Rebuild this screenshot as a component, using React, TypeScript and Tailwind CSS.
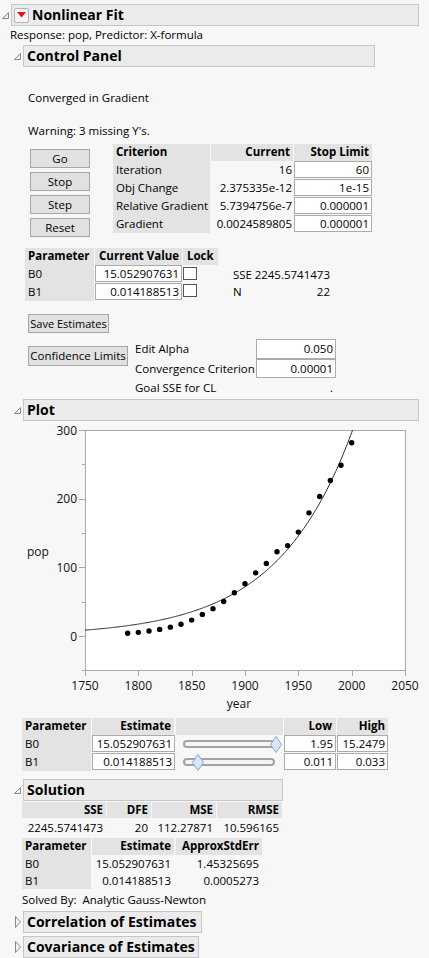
import React from 'react';

const pops = [
  3.93, 5.31, 7.24, 9.64, 12.87, 17.07, 23.19, 31.44, 39.82, 50.16, 62.95,
  75.99, 91.97, 105.71, 122.78, 131.67, 151.33, 179.32, 203.21, 226.5, 248.7, 281.4,
];

const B0 = 15.052907631;
const B1 = 0.014188513;

// plot frame in svg coords
const px = (year: number) => 85 + ((year - 1750) * 320) / 300;
const py = (v: number) => 215 - v * (206 / 300);

function Tri({ open = true }: { open?: boolean }) {
  return open ? (
    <svg width="9" height="9" viewBox="0 0 9 9" className="shrink-0">
      <path d="M7.5 1.5 L7.5 7.5 L1.5 7.5 Z" fill="#f2f2f2" stroke="#8a8a8a" />
    </svg>
  ) : (
    <svg width="9" height="14" viewBox="0 0 9 14" className="shrink-0">
      <path d="M2.5 1.5 L7.5 7 L2.5 12.5 Z" fill="#f2f2f2" stroke="#8a8a8a" />
    </svg>
  );
}

function Head({
  title,
  className,
  box,
  open = true,
  menu = false,
}: {
  title: string;
  className: string;
  box: string;
  open?: boolean;
  menu?: boolean;
}) {
  return (
    <div className={`flex items-center ${className}`}>
      <Tri open={open} />
      <div className={`h-[22px] bg-[#ebebeb] border border-[#c6c6c6] flex items-center ${box}`}>
        {menu && (
          <div className="ml-[2px] w-[15px] h-[15px] rounded-[2px] border border-[#b4b4b4] bg-[#f4f4f4] flex items-center justify-center">
            <svg width="9" height="6" viewBox="0 0 9 6">
              <path d="M0 0 L9 0 L4.5 5.5 Z" fill="#e0181b" />
            </svg>
          </div>
        )}
        <span className="ml-[3px] font-bold text-[14px] leading-none whitespace-nowrap">{title}</span>
      </div>
    </div>
  );
}

function Btn({ children, className }: { children: React.ReactNode; className: string }) {
  return (
    <div className={`border border-[#a6a6a6] bg-[#e1e1e1] flex items-center justify-center whitespace-nowrap ${className}`}>
      {children}
    </div>
  );
}

function Input({ children, className = 'h-[17px]' }: { children: React.ReactNode; className?: string }) {
  return (
    <div className={`bg-white border border-[#ababab] flex items-center justify-end pr-[2px] ${className}`}>
      {children}
    </div>
  );
}

function Slider({ at }: { at: number }) {
  return (
    <div className="relative w-[92px] h-[8px] rounded-full border-2 border-[#a3a3a3] bg-[#f4f4f4]">
      <svg
        width="12"
        height="17"
        viewBox="0 0 12 17"
        className="absolute top-[-6.5px]"
        style={{ left: at - 6 }}
      >
        <path d="M6 0.5 L11.5 8.5 L6 16.5 L0.5 8.5 Z" fill="#d9e6f6" stroke="#86a4cc" />
      </svg>
    </div>
  );
}

function Plot() {
  let d = '';
  for (let y = 1750; y <= 2010; y += 1) {
    const v = B0 * Math.exp(B1 * (y - 1790));
    d += `${y === 1750 ? 'M' : 'L'}${px(y).toFixed(2)} ${py(v).toFixed(2)} `;
  }
  const years = [1750, 1800, 1850, 1900, 1950, 2000, 2050];
  const yv = [-50, 0, 50, 100, 150, 200, 250, 300];
  return (
    <svg width="429" height="297" viewBox="0 0 429 297" className="block">
      <defs>
        <clipPath id="frame">
          <rect x="85" y="9" width="321" height="241" />
        </clipPath>
      </defs>
      <rect x="85.5" y="9.5" width="320" height="240" fill="white" stroke="#a9a9a9" />
      {yv.map((v) => (
        <line
          key={v}
          x1={v % 100 === 0 ? 79 : 82}
          x2="85"
          y1={Math.round(py(v)) + 0.5}
          y2={Math.round(py(v)) + 0.5}
          stroke="#a9a9a9"
        />
      ))}
      {years.map((y) => (
        <line key={y} x1={Math.round(px(y)) + 0.5} x2={Math.round(px(y)) + 0.5} y1="250" y2="255" stroke="#a9a9a9" />
      ))}
      <g fontFamily="'Open Sans', sans-serif" fontSize="12" fill="#111">
        {[0, 100, 200, 300].map((v) => (
          <text key={v} x="77" y={py(v) + 4.5} textAnchor="end">
            {v}
          </text>
        ))}
        {years.map((y) => (
          <text key={y} x={px(y)} y="269" textAnchor="middle">
            {y}
          </text>
        ))}
        <text x="239" y="287" textAnchor="middle">year</text>
        <text x="27" y="135">pop</text>
      </g>
      <g clipPath="url(#frame)">
        <path d={d} fill="none" stroke="#2a2a2a" strokeWidth="1" />
        {pops.map((p, i) => (
          <circle key={i} cx={px(1790 + i * 10)} cy={py(p)} r="2.7" fill="#000" />
        ))}
      </g>
    </svg>
  );
}

export default function App() {
  const gray = 'bg-[#e3e3e3]';
  return (
    <div className="w-[429px] h-[958px] overflow-hidden bg-[#f7f7f7] text-black text-[11.5px] leading-[16px] font-['Open_Sans',sans-serif] whitespace-nowrap">
      <Head title="Nonlinear Fit" menu className="pt-[4px] pl-[1px]" box="ml-[1px] w-[408px]" />
      <div className="ml-[10px] mt-[1px]">Response: pop, Predictor: X-formula</div>
      <Head title="Control Panel" className="mt-[2px] pl-[13px]" box="ml-[1px] w-[352px]" />

      <div className="ml-[28px] mt-[23px]">Converged in Gradient</div>
      <div className="ml-[28px] mt-[17px]">Warning: 3 missing Y's.</div>

      {/* criterion block */}
      <div className="flex mt-[5px]">
        <div className="ml-[30px] mt-[5px] flex flex-col gap-[4px]">
          {['Go', 'Stop', 'Step', 'Reset'].map((b) => (
            <Btn key={b} className="w-[60px] h-[19px]">
              {b}
            </Btn>
          ))}
        </div>
        <div className="ml-[23px] flex flex-col">
          <div className="flex gap-[1px] h-[17px] font-bold">
            <div className={`w-[97px] ${gray} pl-[3px]`}>Criterion</div>
            <div className={`w-[82px] ${gray} text-right pr-[3px]`}>Current</div>
            <div className={`w-[78px] ${gray} text-right pr-[3px]`}>Stop Limit</div>
          </div>
          <div className="flex gap-[1px]">
            <div className={`w-[97px] ${gray} flex flex-col`}>
              {['Iteration', 'Obj Change', 'Relative Gradient', 'Gradient'].map((t) => (
                <div key={t} className="h-[18px] pl-[3px] flex items-center">
                  {t}
                </div>
              ))}
            </div>
            <div className="w-[82px] flex flex-col">
              {['16', '2.375335e-12', '5.7394756e-7', '0.0024589805'].map((t) => (
                <div key={t} className="h-[18px] pr-[1px] flex items-center justify-end">
                  {t}
                </div>
              ))}
            </div>
            <div className="w-[78px] flex flex-col gap-[1px]">
              {['60', '1e-15', '0.000001', '0.000001'].map((t, i) => (
                <Input key={i}>{t}</Input>
              ))}
            </div>
          </div>
        </div>
      </div>

      {/* parameter block */}
      <div className="flex mt-[11px]">
        <div className="ml-[25px] flex flex-col">
          <div className="flex gap-[1px] h-[17px] font-bold">
            <div className={`w-[69px] ${gray} pl-[3px]`}>Parameter</div>
            <div className={`w-[87px] ${gray} text-right pr-[3px]`}>Current Value</div>
            <div className={`w-[35px] ${gray} pl-[4px]`}>Lock</div>
          </div>
          <div className="flex gap-[1px]">
            <div className={`w-[69px] ${gray} flex flex-col h-[36px]`}>
              <div className="h-[18px] pl-[3px] flex items-center">B0</div>
              <div className="h-[18px] pl-[3px] flex items-center">B1</div>
            </div>
            <div className="w-[87px] flex flex-col gap-[1px]">
              <Input>15.052907631</Input>
              <Input>0.014188513</Input>
            </div>
            <div className="w-[35px] flex flex-col gap-[4px] pt-[2px]">
              <div className="w-[14px] h-[13px] bg-white border border-[#555]" />
              <div className="w-[14px] h-[13px] bg-white border border-[#555]" />
            </div>
          </div>
        </div>
        <div className="ml-[15px] mt-[19px] w-[97px] flex flex-col">
          <div className="flex justify-between h-[17px]">
            <span>SSE</span>
            <span>2245.5741473</span>
          </div>
          <div className="flex justify-between h-[17px]">
            <span>N</span>
            <span>22</span>
          </div>
        </div>
      </div>

      <Btn className="ml-[28px] mt-[13px] w-[81px] h-[19px] bg-[#e0e0e0] border-[#8e8e8e] text-[11px]">Save Estimates</Btn>

      <div className="flex mt-[6px]">
        <Btn className="ml-[28px] mt-[7px] w-[100px] h-[20px] border-[#8e8e8e]">Confidence Limits</Btn>
        <div className="ml-[7px] flex flex-col">
          <div className="flex items-center h-[20px]">
            <span className="w-[121px]">Edit Alpha</span>
            <Input className="w-[80px] h-[20px]">0.050</Input>
          </div>
          <div className="flex items-center h-[19px]">
            <span className="w-[121px]">Convergence Criterion</span>
            <Input className="w-[80px] h-[19px]">0.00001</Input>
          </div>
          <div className="flex items-center h-[20px]">
            <span className="w-[121px]">Goal SSE for CL</span>
            <span className="w-[77px] text-right">.</span>
          </div>
        </div>
      </div>

      <Head title="Plot" className="mt-[1px] pl-[13px]" box="ml-[1px] w-[396px]" />
      <Plot />

      {/* estimate / slider table */}
      <div className="ml-[22px] flex flex-col">
        <div className="flex gap-[1px] h-[17px] font-bold">
          <div className={`w-[69px] ${gray} pl-[3px]`}>Parameter</div>
          <div className={`w-[82px] ${gray} text-right pr-[3px]`}>Estimate</div>
          <div className={`w-[107px] ${gray} ml-[1px]`} />
          <div className={`w-[52px] ${gray} text-right pr-[4px]`}>Low</div>
          <div className={`w-[51px] ${gray} text-right pr-[3px]`}>High</div>
        </div>
        <div className="flex gap-[1px]">
          <div className={`w-[69px] ${gray} flex flex-col h-[36px]`}>
            <div className="h-[18px] pl-[3px] flex items-center">B0</div>
            <div className="h-[18px] pl-[3px] flex items-center">B1</div>
          </div>
          <div className="w-[83px] flex flex-col gap-[1px]">
            <Input>15.052907631</Input>
            <Input>0.014188513</Input>
          </div>
          <div className="w-[107px] flex flex-col">
            <div className="h-[18px] pl-[7px] flex items-center">
              <Slider at={91} />
            </div>
            <div className="h-[18px] pl-[7px] flex items-center">
              <Slider at={13} />
            </div>
          </div>
          <div className="w-[52px] flex flex-col gap-[1px]">
            <Input>1.95</Input>
            <Input>0.011</Input>
          </div>
          <div className="w-[51px] flex flex-col gap-[1px]">
            <Input>15.2479</Input>
            <Input>0.033</Input>
          </div>
        </div>
      </div>

      <Head title="Solution" className="mt-[8px] pl-[13px]" box="ml-[1px] w-[260px]" />

      <div className="ml-[22px] mt-[1px] flex flex-col">
        <div className="flex gap-[1px] h-[16px] font-bold">
          <div className={`w-[84px] ${gray} text-right pr-[3px]`}>SSE</div>
          <div className={`w-[44px] ${gray} text-right pr-[3px]`}>DFE</div>
          <div className={`w-[64px] ${gray} text-right pr-[3px]`}>MSE</div>
          <div className={`w-[65px] ${gray} text-right pr-[3px]`}>RMSE</div>
        </div>
        <div className="flex gap-[1px] h-[20px] items-center">
          <div className="w-[84px] text-right pr-[3px]">2245.5741473</div>
          <div className="w-[44px] text-right pr-[3px]">20</div>
          <div className="w-[64px] text-right pr-[3px]">112.27871</div>
          <div className="w-[65px] text-right pr-[3px]">10.596165</div>
        </div>
        <div className="flex gap-[1px] h-[17px] font-bold">
          <div className={`w-[69px] ${gray} pl-[3px]`}>Parameter</div>
          <div className={`w-[82px] ${gray} text-right pr-[3px]`}>Estimate</div>
          <div className={`w-[86px] ${gray} text-right pr-[3px] ml-[1px]`}>ApproxStdErr</div>
        </div>
        <div className="flex gap-[1px]">
          <div className={`w-[69px] ${gray} flex flex-col h-[34px]`}>
            <div className="h-[17px] pl-[3px] flex items-center">B0</div>
            <div className="h-[17px] pl-[3px] flex items-center">B1</div>
          </div>
          <div className="w-[82px] flex flex-col">
            <div className="h-[17px] pr-[3px] flex items-center justify-end">15.052907631</div>
            <div className="h-[17px] pr-[3px] flex items-center justify-end">0.014188513</div>
          </div>
          <div className="w-[87px] flex flex-col">
            <div className="h-[17px] pr-[3px] flex items-center justify-end">1.45325695</div>
            <div className="h-[17px] pr-[3px] flex items-center justify-end">0.0005273</div>
          </div>
        </div>
      </div>
      <div className="ml-[22px] mt-[3px] whitespace-pre">Solved By:  Analytic Gauss-Newton</div>

      <Head title="Correlation of Estimates" open={false} className="mt-[3px] pl-[13px]" box="ml-[1px] w-[179px]" />
      <Head title="Covariance of Estimates" open={false} className="mt-[3px] pl-[13px]" box="ml-[1px] w-[176px]" />
    </div>
  );
}
